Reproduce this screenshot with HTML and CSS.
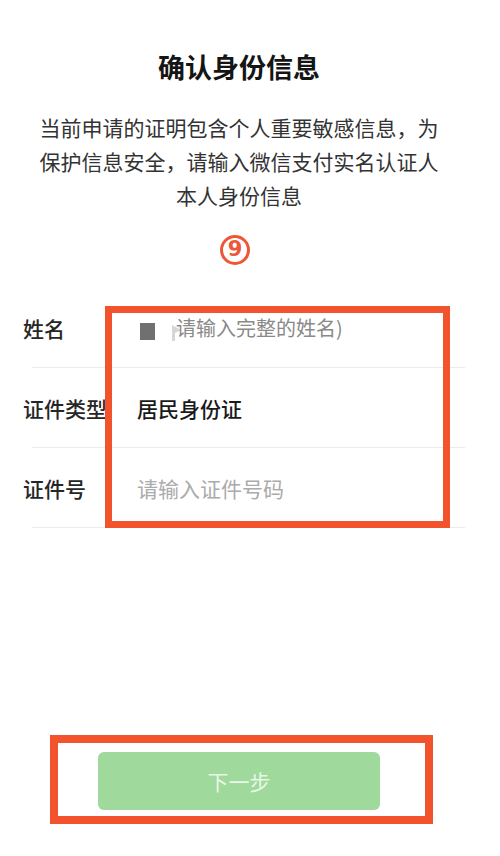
FILE: index.html
```html
<!DOCTYPE html>
<html lang="zh">
<head>
<meta charset="utf-8">
<title>确认身份信息</title>
<link rel="stylesheet" href="styles.css">
</head>
<body>
<div class="page">
  <div class="head">
    <h1 class="title">确认身份信息</h1>
    <p class="desc">当前申请的证明包含个人重要敏感信息，为保护信息安全，请输入微信支付实名认证人本人身份信息</p>
  </div>
  <div class="mark">9</div>
  <div class="form">
    <div class="row">
      <span class="label">姓名</span>
      <span class="value name">
        <span class="sq"></span>
        <svg class="caret" width="10" height="17" viewBox="0 0 10 17"><path d="M0 1 L9 6 L3 9 L3 17 L0 17 Z" fill="#d6d6d6"/></svg>
        <span class="ph-dark">请输入完整的姓名)</span>
      </span>
    </div>
    <div class="row">
      <span class="label">证件类型</span>
      <span class="value strong">居民身份证</span>
    </div>
    <div class="row">
      <span class="label">证件号</span>
      <span class="value ph">请输入证件号码</span>
    </div>
    <div class="hl hl-form"></div>
  </div>
  <div class="btn-wrap">
    <div class="btn">下一步</div>
  </div>
</div>
</body>
</html>
```
FILE: styles.css
```css
html, body {
  margin: 0;
  padding: 0;
  background: #ffffff;
}
body {
  width: 500px;
  height: 856px;
  overflow: hidden;
  font-family: "Noto Sans CJK SC", "Noto Sans", sans-serif;
  color: #1a1a1a;
}
.page {
  position: relative;
}
.head {
  padding-right: 22px;
  text-align: center;
}
.title {
  margin: 0;
  padding-top: 50px;
  font-size: 27px;
  line-height: 34px;
  font-weight: 700;
  color: #151515;
}
.desc {
  margin: 26px auto 0;
  width: 412px;
  font-size: 21px;
  line-height: 34px;
  color: #333333;
}
.mark {
  margin: 23px 0 0 220px;
  width: 30px;
  height: 30px;
  box-sizing: border-box;
  border: 3px solid #ef5638;
  border-radius: 50%;
  color: #ef5638;
  font-family: "DejaVu Sans", sans-serif;
  font-weight: 700;
  font-size: 21px;
  line-height: 23px;
  text-align: center;
}
.form {
  position: relative;
  margin-top: 23px;
  padding: 0 35px 0 23px;
}
.row {
  display: flex;
  align-items: center;
  height: 80px;
  background-image: linear-gradient(#ececec, #ececec);
  background-size: calc(100% - 9px) 1px;
  background-position: right bottom;
  background-repeat: no-repeat;
}
.label {
  width: 114px;
  flex: none;
  font-size: 21px;
  font-weight: 500;
  color: #262626;
}
.value {
  font-size: 21px;
}
.strong {
  font-weight: 500;
  color: #1a1a1a;
}
.ph {
  color: #ababab;
}
.name {
  display: flex;
  align-items: center;
  margin-top: -2px;
}
.sq {
  width: 15px;
  height: 17px;
  background: #707070;
  margin: 8px 0 0 3px;
}
.caret {
  margin: 10px 0 0 17px;
}
.ph-dark {
  font-size: 20px;
  color: #8a8a8a;
  margin-left: -6px;
}
.hl {
  position: absolute;
  box-sizing: border-box;
  border: 7px solid #f2522c;
}
.hl-form {
  left: 105px;
  top: 18px;
  width: 345px;
  height: 222px;
}
.btn-wrap {
  margin: 207px 0 0 50px;
  width: 383px;
  box-sizing: border-box;
  border: 8px solid #f2522c;
  padding: 9px 45px 6px 40px;
}
.btn {
  height: 58px;
  border-radius: 6px;
  background: #9fd99b;
  color: #e9f7e6;
  font-size: 21px;
  line-height: 58px;
  text-align: center;
}
```
